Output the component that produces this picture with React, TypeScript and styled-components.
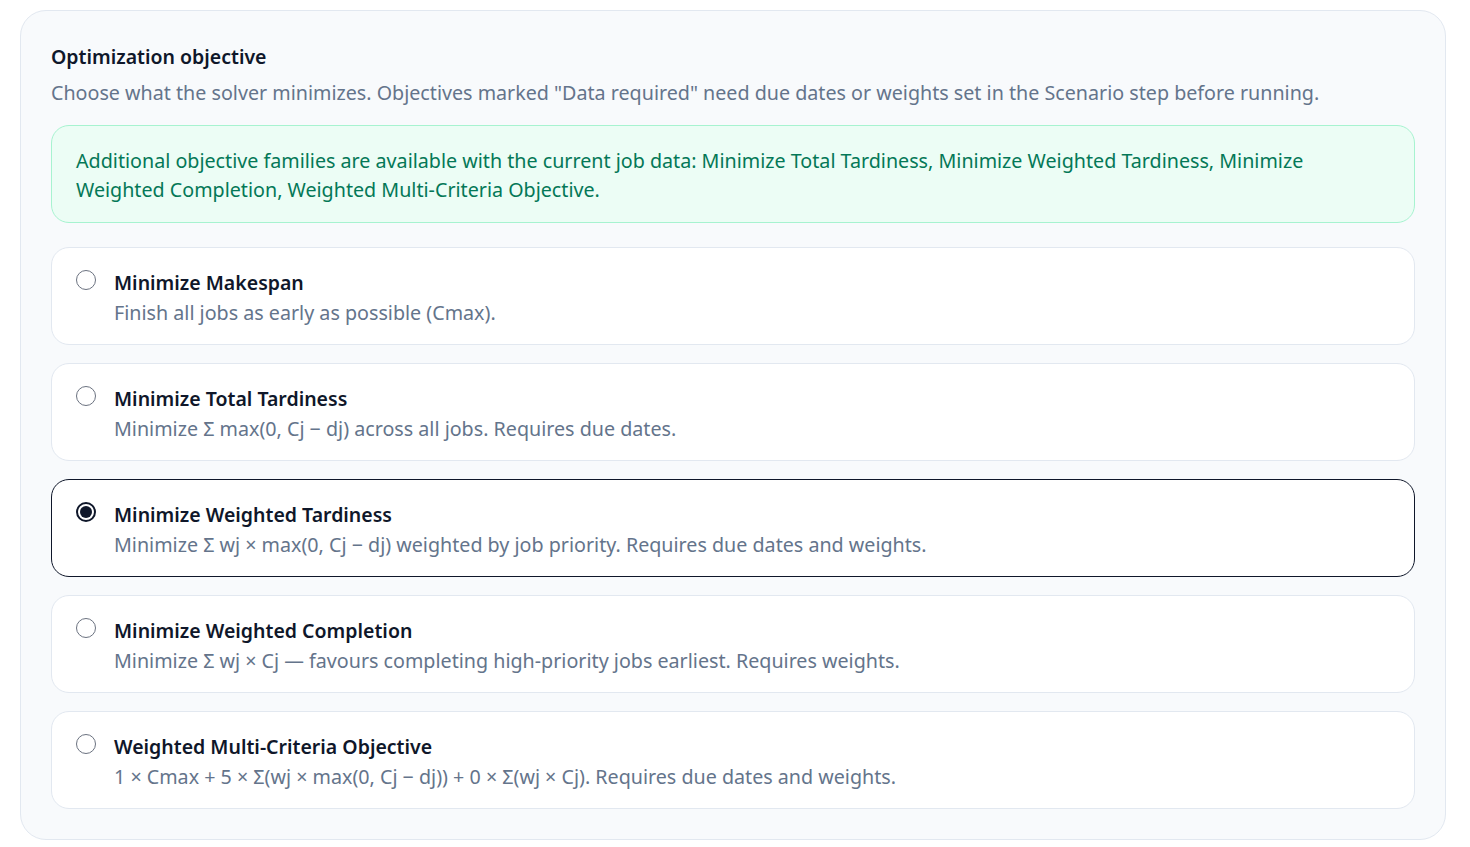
import React, { useState } from "react";
import styled, { createGlobalStyle } from "styled-components";

const Global = createGlobalStyle`
  html, body { margin: 0; padding: 0; background: #ffffff; }
  body { font-family: "Noto Sans", "Open Sans", sans-serif; }
  * { box-sizing: border-box; }
`;

const Page = styled.div`
  padding: 10px 24px 8px 20px;
`;

const Panel = styled.section`
  background: #f8fafc;
  border: 1px solid #e2e8f0;
  border-radius: 26px;
  padding: 31px 30px 30px 30px;
  display: flex;
  flex-direction: column;
`;

const Title = styled.h2`
  margin: 0;
  font-size: 19.5px;
  font-weight: 600;
  line-height: 30px;
  color: #0f172a;
`;

const Subtitle = styled.p`
  margin: 6px 0 0;
  font-size: 19.7px;
  line-height: 30px;
  color: #64748b;
`;

const Notice = styled.div`
  margin-top: 17px;
  background: #ecfdf5;
  border: 1px solid #a7f3d0;
  border-radius: 18px;
  padding: 20px 24px 18px;
  color: #047857;
  font-size: 19.7px;
  line-height: 29px;
`;

const List = styled.div`
  margin-top: 24px;
  display: flex;
  flex-direction: column;
  gap: 18px;
`;

const Option = styled.label<{ $selected: boolean }>`
  display: flex;
  align-items: flex-start;
  gap: 18px;
  background: #ffffff;
  border: 1px solid ${(p) => (p.$selected ? "#0f172a" : "#e2e8f0")};
  border-radius: 18px;
  padding: 20px 24px 16px;
  cursor: pointer;
`;

const Radio = styled.span<{ $checked: boolean }>`
  flex: none;
  width: 20px;
  height: 20px;
  margin-top: 2px;
  border-radius: 50%;
  border: ${(p) => (p.$checked ? "2px solid #0f172a" : "1.5px solid #6b7280")};
  background: #ffffff;
  display: flex;
  align-items: center;
  justify-content: center;
  &::after {
    content: "";
    display: ${(p) => (p.$checked ? "block" : "none")};
    width: 12px;
    height: 12px;
    border-radius: 50%;
    background: #0f172a;
  }
`;

const OptionText = styled.div`
  display: flex;
  flex-direction: column;
`;

const OptionTitle = styled.span`
  font-size: 19.5px;
  font-weight: 600;
  line-height: 30px;
  color: #0f172a;
`;

const OptionDesc = styled.span`
  font-size: 19.7px;
  line-height: 30px;
  color: #64748b;
`;

const options = [
  { id: "makespan", title: "Minimize Makespan", desc: "Finish all jobs as early as possible (Cmax)." },
  { id: "tardiness", title: "Minimize Total Tardiness", desc: "Minimize Σ max(0, Cj − dj) across all jobs. Requires due dates." },
  { id: "wtardiness", title: "Minimize Weighted Tardiness", desc: "Minimize Σ wj × max(0, Cj − dj) weighted by job priority. Requires due dates and weights." },
  { id: "wcompletion", title: "Minimize Weighted Completion", desc: "Minimize Σ wj × Cj — favours completing high-priority jobs earliest. Requires weights." },
  { id: "multi", title: "Weighted Multi-Criteria Objective", desc: "1 × Cmax + 5 × Σ(wj × max(0, Cj − dj)) + 0 × Σ(wj × Cj). Requires due dates and weights." },
];

export default function App() {
  const [selected, setSelected] = useState("wtardiness");
  return (
    <Page>
      <Global />
      <Panel>
        <Title>Optimization objective</Title>
        <Subtitle>
          Choose what the solver minimizes. Objectives marked "Data required" need due dates or weights set in the Scenario step before running.
        </Subtitle>
        <Notice>
          Additional objective families are available with the current job data: Minimize Total Tardiness, Minimize Weighted Tardiness, Minimize Weighted Completion, Weighted Multi-Criteria Objective.
        </Notice>
        <List>
          {options.map((o) => (
            <Option key={o.id} $selected={selected === o.id} onClick={() => setSelected(o.id)}>
              <Radio $checked={selected === o.id} />
              <OptionText>
                <OptionTitle>{o.title}</OptionTitle>
                <OptionDesc>{o.desc}</OptionDesc>
              </OptionText>
            </Option>
          ))}
        </List>
      </Panel>
    </Page>
  );
}
